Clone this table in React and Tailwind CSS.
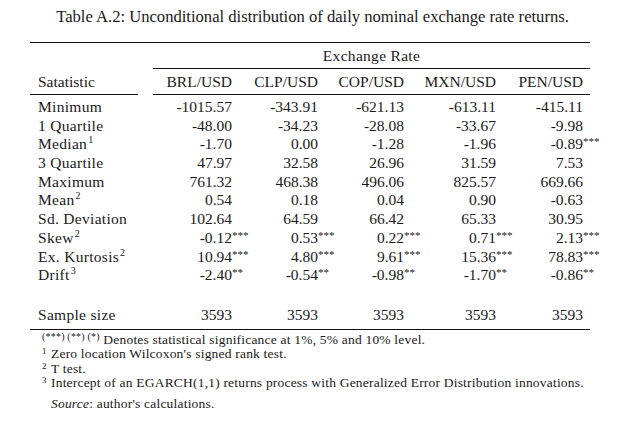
import React from "react";

const cols = "grid grid-cols-[115px_94px_86px_86px_92px_87px]";

const rows = [
  ["Minimum", null, ["-1015.57", "-343.91", "-621.13", "-613.11", "-415.11"]],
  ["1 Quartile", null, ["-48.00", "-34.23", "-28.08", "-33.67", "-9.98"]],
  ["Median", "1", ["-1.70", "0.00", "-1.28", "-1.96", "-0.89***"]],
  ["3 Quartile", null, ["47.97", "32.58", "26.96", "31.59", "7.53"]],
  ["Maximum", null, ["761.32", "468.38", "496.06", "825.57", "669.66"]],
  ["Mean", "2", ["0.54", "0.18", "0.04", "0.90", "-0.63"]],
  ["Sd. Deviation", null, ["102.64", "64.59", "66.42", "65.33", "30.95"]],
  ["Skew", "2", ["-0.12***", "0.53***", "0.22***", "0.71***", "2.13***"]],
  ["Ex. Kurtosis", "2", ["10.94***", "4.80***", "9.61***", "15.36***", "78.83***"]],
  ["Drift", "3", ["-2.40**", "-0.54**", "-0.98**", "-1.70**", "-0.86**"]],
];

const heads = ["BRL/USD", "CLP/USD", "COP/USD", "MXN/USD", "PEN/USD"];

function Value({ v }) {
  const i = v.indexOf("*");
  if (i < 0) return <span>{v}</span>;
  return (
    <span className="relative">
      {v.slice(0, i)}
      <span className="absolute left-full top-[1px] text-[11px] leading-none">
        {v.slice(i)}
      </span>
    </span>
  );
}

function Sup({ children }) {
  return (
    <span className="relative top-[-6px] text-[10px] leading-none ml-[1px]">{children}</span>
  );
}

export default function App() {
  return (
    <div className="w-[625px] h-[426px] bg-white text-[#1a1a1a] font-['Liberation_Serif',serif] overflow-hidden">
      <div className="h-[42px] leading-[34px] text-[16.6px] text-center">
        Table A.2: Unconditional distribution of daily nominal exchange rate returns.
      </div>

      <div className="ml-[30px] w-[560px] text-[15.5px]">
        <div className="h-px bg-[#111]" />

        <div className={cols + " h-[25px] leading-[25px]"}>
          <div />
          <div className="col-span-5 text-center pl-[8px] tracking-[0.3px]">Exchange Rate</div>
        </div>
        <div className={cols}>
          <div />
          <div className="col-span-5 ml-[8px] h-px bg-[#111]" />
        </div>

        <div className={cols + " h-[25px] leading-[25px]"}>
          <div className="pl-[8px]">Satatistic</div>
          {heads.map((h) => (
            <div key={h} className="text-right pr-[7px]">
              {h}
            </div>
          ))}
        </div>
        <div className={cols}>
          <div className="mr-[7px] h-px bg-[#111]" />
          <div className="col-span-5 ml-[8px] h-px bg-[#111]" />
        </div>

        <div className="pt-[3px]">
          {rows.map(([label, note, vals]) => (
            <div key={label} className={cols + " h-[18.7px] leading-[18.7px]"}>
              <div className="pl-[8px] whitespace-nowrap tracking-[0.3px]">
                {label}
                {note && <Sup>{note}</Sup>}
              </div>
              {vals.map((v, j) => (
                <div key={j} className="text-right pr-[7px]">
                  <Value v={v} />
                </div>
              ))}
            </div>
          ))}
        </div>

        <div className={cols + " mt-[20px] h-[19px] leading-[19px] mb-[5px]"}>
          <div className="pl-[8px] tracking-[0.3px]">Sample size</div>
          {heads.map((h) => (
            <div key={h} className="text-right pr-[7px]">
              3593
            </div>
          ))}
        </div>
        <div className="h-px bg-[#111]" />

        <div className="mt-[3px] text-[13.5px] tracking-[0.2px] leading-[14.5px] pl-[12px] whitespace-nowrap">
          <div>
            <span className="relative top-[-4px] text-[10px] leading-none">(***) (**) (*)</span>{" "}
            Denotes statistical significance at 1%, 5% and 10% level.
          </div>
          <div>
            <span className="inline-block w-[9px] relative top-[-4px] text-[9px] leading-none">1</span>
            Zero location Wilcoxon's signed rank test.
          </div>
          <div>
            <span className="inline-block w-[9px] relative top-[-4px] text-[9px] leading-none">2</span>
            T test.
          </div>
          <div>
            <span className="inline-block w-[9px] relative top-[-4px] text-[9px] leading-none">3</span>
            Intercept of an EGARCH(1,1) returns process with Generalized Error Distribution innovations.
          </div>
          <div className="mt-[6.5px] pl-[9px]">
            <span className="italic">Source</span>: author's calculations.
          </div>
        </div>
      </div>
    </div>
  );
}
